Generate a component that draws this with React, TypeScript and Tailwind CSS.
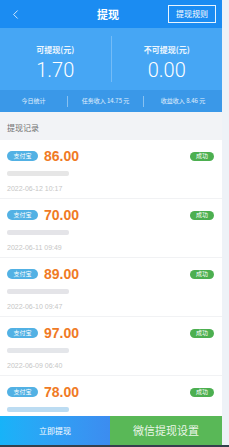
import { ChevronLeft } from "lucide-react";

type Record = {
  amount: string;
  date?: string;
  masked: string;
};

const records: Record[] = [
  { amount: "86.00", date: "2022-06-12 10:17", masked: "bg-[#e6e6e6]" },
  { amount: "70.00", date: "2022-06-11 09:49", masked: "bg-[#e4e4e8]" },
  { amount: "89.00", date: "2022-06-10 09:47", masked: "bg-[#e4e4e8]" },
  { amount: "97.00", date: "2022-06-09 06:40", masked: "bg-[#e4e6ea]" },
  // last row is cut off by the action bar, the date is not visible
  { amount: "78.00", masked: "bg-[#bcdcf2]" },
];

const RecordRow = ({ amount, date, masked }: Record) => (
  <div className="h-[59px] shrink-0 border-b border-[#f1f2f4] bg-white pl-[7px] pr-[8px] pt-[10px]">
    <div className="flex h-[12px] items-center">
      <span className="flex h-[10px] w-[31px] items-center justify-center rounded-full bg-[#52b1e4] text-[6px] leading-none text-white">
        支付宝
      </span>
      <span className="ml-[6px] text-[14px] font-bold leading-none text-[#f07a24] [font-family:'Liberation_Sans',sans-serif]">
        {amount}
      </span>
      <span className="ml-auto flex h-[9px] w-[24px] items-center justify-center rounded-full bg-[#4caf50] text-[6px] leading-none text-white">
        成功
      </span>
    </div>
    <div className={`mt-[9px] h-[5px] w-[62px] rounded-[2px] blur-[0.6px] ${masked}`} />
    {date && (
      <div className="mt-[9px] text-[7px] leading-[8px] text-[#c6c6c6] [font-family:'Liberation_Sans',sans-serif]">
        {date}
      </div>
    )}
  </div>
);

export default function App() {
  return (
    <div className="flex h-[447px] w-[229px] flex-col overflow-hidden bg-[#eef2f6] [font-family:'Noto_Sans_CJK_SC','Noto_Sans',sans-serif]">
      <div className="flex min-h-0 flex-1">
        <div className="flex w-[222px] flex-col">
          {/* header */}
          <div className="flex h-[28px] shrink-0 items-center bg-[#1b8cf2] pl-[8px] pr-[6px] text-white">
            <ChevronLeft className="h-[15px] w-[15px]" strokeWidth={1.25} />
            <div className="flex-1 pl-[25px] text-center text-[11px] font-bold leading-none">
              提现
            </div>
            <div className="flex h-[18px] w-[48px] items-center justify-center border border-white/90 text-[8px] leading-none">
              提现规则
            </div>
          </div>

          {/* balances */}
          <div className="flex h-[62px] shrink-0 bg-[#46a6f4] text-white">
            <div className="flex flex-1 flex-col items-center pt-[16px]">
              <div className="text-[8px] font-bold leading-[12px] text-white/90">可提现(元)</div>
              <div className="mt-[2px] text-[20px] font-light leading-[24px] [font-family:Roboto,sans-serif]">
                1.70
              </div>
            </div>
            <div className="my-[8px] w-px bg-white/25" />
            <div className="flex flex-1 flex-col items-center pt-[16px]">
              <div className="text-[8px] font-bold leading-[12px] text-white/90">不可提现(元)</div>
              <div className="mt-[2px] text-[20px] font-light leading-[24px] [font-family:Roboto,sans-serif]">
                0.00
              </div>
            </div>
          </div>

          {/* today stats */}
          <div className="flex h-[22px] shrink-0 items-center bg-[#3a98e8] text-[6px] leading-none text-white/85">
            <div className="w-[67px] text-center">今日统计</div>
            <div className="h-[11px] w-px bg-white/40" />
            <div className="w-[75px] text-center">任务收入 14.75 元</div>
            <div className="h-[11px] w-px bg-white/40" />
            <div className="flex-1 text-center">收益收入 8.46 元</div>
          </div>

          {/* section title */}
          <div className="flex h-[28px] shrink-0 items-end bg-[#f2f3f6] pb-[8px] pl-[7px] text-[8px] leading-none text-[#707070]">
            提现记录
          </div>

          {/* list */}
          <div className="flex min-h-0 flex-1 flex-col overflow-hidden bg-white">
            {records.map((r) => (
              <RecordRow key={r.amount} {...r} />
            ))}
          </div>

          {/* actions */}
          <div className="flex h-[29px] shrink-0">
            <button
              type="button"
              className="flex w-[110px] items-center justify-center bg-gradient-to-r from-[#17b3f8] to-[#3c8cf0] text-[8px] leading-none text-white"
            >
              立即提现
            </button>
            <button
              type="button"
              className="flex flex-1 items-center justify-center bg-[#59b857] text-[11px] leading-none text-[#eaf6e8]"
            >
              微信提现设置
            </button>
          </div>
        </div>
        <div className="flex-1 bg-[#eef2f7]" />
      </div>
      <div className="h-[2px] shrink-0 bg-[#34404c]" />
    </div>
  );
}
